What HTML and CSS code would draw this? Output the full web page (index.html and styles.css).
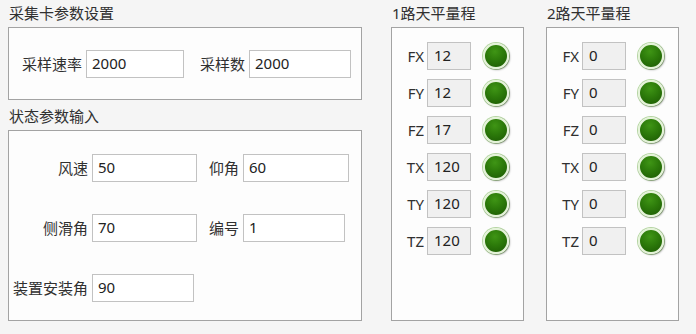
FILE: index.html
```html
<!DOCTYPE html>
<html lang="zh-CN">
<head>
    <meta charset="UTF-8">
    <title>采集设置</title>
    <link rel="stylesheet" href="styles.css">
</head>
<body>
<div class="page">
    <div class="left">
        <div class="title">采集卡参数设置</div>
        <div class="box card-box">
            <label class="lbl">采样速率</label>
            <input class="field w98" type="text" value="2000">
            <label class="lbl gap-l">采样数</label>
            <input class="field w102" type="text" value="2000">
        </div>

        <div class="title second">状态参数输入</div>
        <div class="box state-box">
            <label class="lbl">风速</label>
            <input class="field" type="text" value="50">
            <label class="lbl">仰角</label>
            <input class="field" type="text" value="60">

            <label class="lbl">侧滑角</label>
            <input class="field" type="text" value="70">
            <label class="lbl">编号</label>
            <input class="field w102" type="text" value="1">

            <label class="lbl">装置安装角</label>
            <input class="field w102" type="text" value="90">
        </div>
    </div>

    <div class="range">
        <div class="title">1路天平量程</div>
        <div class="box range-box">
            <div class="row"><span class="axis">FX</span><input class="field ro" type="text" value="12" readonly><span class="led"></span></div>
            <div class="row"><span class="axis">FY</span><input class="field ro" type="text" value="12" readonly><span class="led"></span></div>
            <div class="row"><span class="axis">FZ</span><input class="field ro" type="text" value="17" readonly><span class="led"></span></div>
            <div class="row"><span class="axis">TX</span><input class="field ro" type="text" value="120" readonly><span class="led"></span></div>
            <div class="row"><span class="axis">TY</span><input class="field ro" type="text" value="120" readonly><span class="led"></span></div>
            <div class="row"><span class="axis">TZ</span><input class="field ro" type="text" value="120" readonly><span class="led"></span></div>
        </div>
    </div>

    <div class="range two">
        <div class="title">2路天平量程</div>
        <div class="box range-box">
            <div class="row"><span class="axis">FX</span><input class="field ro" type="text" value="0" readonly><span class="led"></span></div>
            <div class="row"><span class="axis">FY</span><input class="field ro" type="text" value="0" readonly><span class="led"></span></div>
            <div class="row"><span class="axis">FZ</span><input class="field ro" type="text" value="0" readonly><span class="led"></span></div>
            <div class="row"><span class="axis">TX</span><input class="field ro" type="text" value="0" readonly><span class="led"></span></div>
            <div class="row"><span class="axis">TY</span><input class="field ro" type="text" value="0" readonly><span class="led"></span></div>
            <div class="row"><span class="axis">TZ</span><input class="field ro" type="text" value="0" readonly><span class="led"></span></div>
        </div>
    </div>
</div>
</body>
</html>
```

FILE: styles.css
```css
body {
    margin: 0;
    background-color: #f5f5f5;
    font-family: "Noto Sans", "Noto Sans CJK SC", sans-serif;
    font-size: 15px;
    color: #303030;
}
.page {
    display: flex;
    padding: 3px 0 0 8px;
}
.left {
    width: 354px;
}
.title {
    height: 20px;
    line-height: 20px;
    margin-bottom: 4px;
    padding-left: 1px;
}
.title.second {
    margin-top: 6px;
}
.box {
    background-color: #fdfdfd;
    border: 1px solid #a3a3a3;
}
.lbl {
    line-height: 28px;
    white-space: nowrap;
}
.field {
    box-sizing: border-box;
    height: 28px;
    border: 1px solid #c2c2c2;
    background: #fff;
    font: inherit;
    color: #222;
    padding: 0 5px 2px;
    outline: none;
    min-width: 0;
}
.w98 { width: 98px; }
.w102 { width: 102px; }

/* 采集卡参数 */
.card-box {
    height: 71px;
    display: flex;
    align-items: center;
    padding-left: 13px;
}
.card-box .lbl {
    margin-right: 4px;
}
.gap-l {
    margin-left: 16px;
}

/* 状态参数 */
.state-box {
    box-sizing: border-box;
    height: 191px;
    display: grid;
    grid-template-columns: 79px 105px 38px 106px;
    grid-auto-rows: 28px;
    column-gap: 4px;
    row-gap: 32px;
    align-content: start;
    padding-top: 23px;
}
.state-box .lbl {
    text-align: right;
}

/* 天平量程 */
.range {
    margin-left: 29px;
    width: 133px;
}
.range.two {
    margin-left: 22px;
}
.range-box {
    box-sizing: border-box;
    height: 294px;
    padding-top: 14px;
}
.row {
    display: flex;
    align-items: center;
    height: 28px;
    margin-bottom: 9px;
}
.axis {
    width: 32px;
    text-align: right;
    margin-right: 3px;
}
.field.ro {
    width: 44px;
    background: #f0f0f0;
    padding-left: 6px;
}
.led {
    width: 22px;
    height: 22px;
    margin-left: 12px;
    border-radius: 50%;
    border: 2px solid #e4f3d8;
    background: radial-gradient(circle at 45% 30%, #3f9515 0%, #2c7a0a 45%, #1b5703 100%);
    box-shadow: 1px 1px 2px rgba(0, 0, 0, 0.35), 0 0 0 1px #b9d9a6;
}
```
